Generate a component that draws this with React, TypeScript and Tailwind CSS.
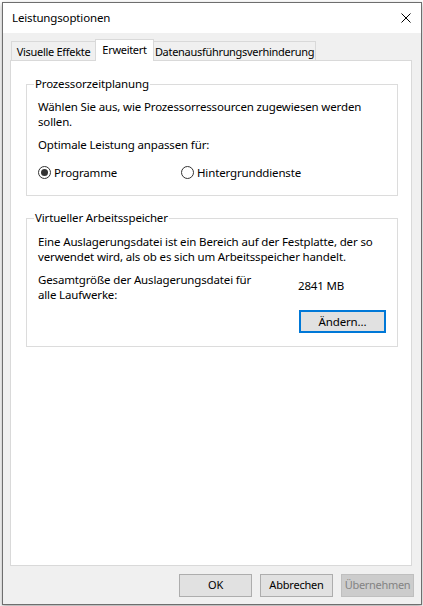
import React from "react";

const font = "font-['Segoe_UI','Noto_Sans',sans-serif] text-[11.5px] tracking-[-0.15px] text-black";

function Radio({ checked, label }: { checked?: boolean; label: string }) {
  return (
    <div className="flex items-center gap-[3px]">
      <span className="flex h-[13px] w-[13px] items-center justify-center rounded-full border border-[#333333] bg-white">
        {checked && <span className="h-[7px] w-[7px] rounded-full bg-[#333333]" />}
      </span>
      <span className="whitespace-nowrap leading-[15px]">{label}</span>
    </div>
  );
}

function GroupBox({ title, children, className }: { title: string; children: React.ReactNode; className?: string }) {
  return (
    <fieldset className={`ml-[15px] w-[372px] min-w-0 border border-[#dcdcdc] ${className ?? ""}`}>
      <legend className="ml-[7px] px-[1px] leading-[16px]">{title}</legend>
      {children}
    </fieldset>
  );
}

function Button({ label, disabled }: { label: string; disabled?: boolean }) {
  return (
    <button
      className={
        disabled
          ? "h-[23px] w-[73px] whitespace-nowrap border border-[#bfbfbf] bg-[#cccccc] text-[11px] tracking-[-0.3px] text-[#838383]"
          : "h-[23px] w-[73px] whitespace-nowrap border border-[#adadad] bg-[#e1e1e1] text-[11px] tracking-[-0.2px]"
      }
    >
      {label}
    </button>
  );
}

export default function App() {
  return (
    <div className={`h-[606px] w-[423px] overflow-hidden bg-white ${font}`}>
      <div className="ml-[2px] mt-[2px] flex h-[603px] w-[420px] flex-col border border-[#6e6e6e] bg-[#f0f0f0] shadow-[0_2px_5px_rgba(0,0,0,0.35)]">
        {/* Title bar */}
        <div className="flex h-[30px] items-center justify-between bg-white pl-[9px] pr-[10px]">
          <span className="leading-[16px]">Leistungsoptionen</span>
          <svg width="10" height="10" viewBox="0 0 10 10" className="shrink-0">
            <path d="M0.5 0.5 L9.5 9.5 M9.5 0.5 L0.5 9.5" stroke="#000" strokeWidth="1" fill="none" />
          </svg>
        </div>

        {/* Body */}
        <div className="flex flex-1 flex-col pl-[7px] pt-[6px]">
          {/* Tabs */}
          <div className="flex items-end whitespace-nowrap pl-[1px] text-[11px] tracking-[-0.3px]">
            <div className="flex h-[19px] w-[85px] items-center justify-center border border-b-0 border-[#d9d9d9] bg-[#f0f0f0] leading-[15px]">
              Visuelle Effekte
            </div>
            <div className="relative z-10 -mb-px -ml-px flex h-[22px] w-[59px] items-start justify-center border border-b-0 border-[#d9d9d9] bg-white pt-[2px] leading-[15px]">
              Erweitert
            </div>
            <div className="-ml-px flex h-[19px] w-[163px] items-center justify-center border border-b-0 border-[#d9d9d9] bg-[#f0f0f0] leading-[15px]">
              Datenausführungsverhinderung
            </div>
          </div>

          {/* Tab panel */}
          <div className="h-[506px] w-[402px] border border-[#d9d9d9] bg-white pt-[15px]">
            <GroupBox title="Prozessorzeitplanung">
              <div className="px-[11px] pb-[15px] pt-[7px]">
                <p className="whitespace-nowrap leading-[15px]">
                  Wählen Sie aus, wie Prozessorressourcen zugewiesen werden
                  <br />
                  sollen.
                </p>
                <p className="mt-[8px] leading-[15px]">Optimale Leistung anpassen für:</p>
                <div className="mt-[13px] flex">
                  <div className="w-[143px]">
                    <Radio checked label="Programme" />
                  </div>
                  <Radio label="Hintergrunddienste" />
                </div>
              </div>
            </GroupBox>

            <GroupBox title="Virtueller Arbeitsspeicher" className="mt-[14px]">
              <div className="px-[11px] pb-[13px] pt-[8px]">
                <p className="whitespace-nowrap leading-[15px]">
                  Eine Auslagerungsdatei ist ein Bereich auf der Festplatte, der so
                  <br />
                  verwendet wird, als ob es sich um Arbeitsspeicher handelt.
                </p>
                <div className="mt-[8px] flex items-center">
                  <p className="w-[260px] whitespace-nowrap leading-[15px]">
                    Gesamtgröße der Auslagerungsdatei für
                    <br />
                    alle Laufwerke:
                  </p>
                  <span className="-mt-[3px] leading-[15px]">2841 MB</span>
                </div>
                <div className="mt-[8px] flex justify-end">
                  <button className="h-[23px] w-[87px] border-2 border-[#0078d7] bg-[#e1e1e1]">
                    Ändern...
                  </button>
                </div>
              </div>
            </GroupBox>
          </div>

          {/* Dialog buttons */}
          <div className="mt-[8px] flex justify-end gap-[8px] pr-[7px]">
            <Button label="OK" />
            <Button label="Abbrechen" />
            <Button label="Übernehmen" disabled />
          </div>
        </div>
      </div>
    </div>
  );
}
